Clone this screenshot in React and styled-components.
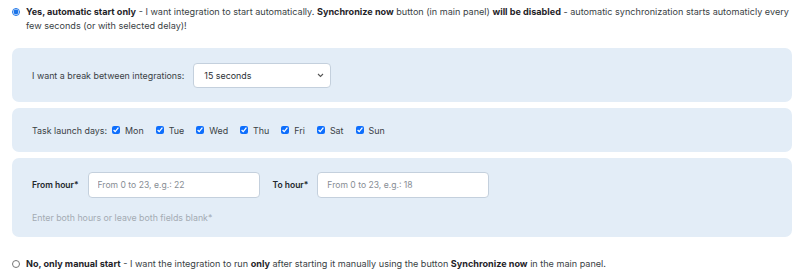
import React, { useState } from 'react'
import styled, { createGlobalStyle } from 'styled-components'

const GlobalStyle = createGlobalStyle`
  body {
    margin: 0;
    background: #ffffff;
    font-family: Inter, "Noto Sans", Arial, sans-serif;
    color: #343a40;
  }
`

const Page = styled.div`
  width: 800px;
  height: 275px;
  box-sizing: border-box;
  padding: 5px 8px 0 12px;
  overflow: hidden;
`

const Option = styled.label`
  display: flex;
  align-items: flex-start;
  gap: 6px;
  font-size: 9.1px;
  line-height: 14px;
  color: #3a3f45;
  margin-top: ${props => props.top || 0}px;
  cursor: pointer;

  b {
    font-weight: 700;
    color: #1f2429;
  }
`

const Radio = styled.input.attrs({ type: 'radio' })`
  width: 8px;
  height: 8px;
  margin: 3px 0 0 0;
  flex: none;
  accent-color: #1a73e8;
`

const Panels = styled.div`
  display: flex;
  flex-direction: column;
  gap: 6px;
  margin-top: 15px;
`

const Panel = styled.div`
  background: #e3edf7;
  border-radius: 7px;
  padding: ${props => props.pad || '0 20px'};
  height: ${props => props.h}px;
  box-sizing: border-box;
  display: flex;
  flex-direction: column;
  justify-content: ${props => (props.top ? 'flex-start' : 'center')};
`

const Row = styled.div`
  display: flex;
  align-items: center;
  gap: ${props => props.gap || 0}px;
  font-size: 8.9px;
  color: #3a3f45;
`

const Label = styled.span`
  font-weight: ${props => (props.bold ? 600 : 400)};
  font-size: ${props => (props.bold ? '8.5px' : 'inherit')};
  color: ${props => (props.bold ? '#22272c' : '#3a3f45')};
  margin-left: ${props => props.ml || 0}px;
`

const SelectBox = styled.div`
  position: relative;
  width: 138px;
  height: 25px;
`

const Select = styled.select`
  appearance: none;
  width: 100%;
  height: 100%;
  border: 1px solid #c4d0dd;
  border-radius: 4px;
  background: #ffffff;
  font-family: inherit;
  font-size: 8.9px;
  color: #2b3035;
  padding: 0 10px;
  outline: none;
`

const Chevron = styled.svg`
  position: absolute;
  right: 7px;
  top: 10px;
  width: 7px;
  height: 5px;
  pointer-events: none;
`

const Days = styled.div`
  display: flex;
  align-items: center;
  gap: 12px;
`

const Day = styled.label`
  display: flex;
  align-items: center;
  gap: 5px;
  cursor: pointer;
`

const Check = styled.input.attrs({ type: 'checkbox' })`
  width: 8px;
  height: 8px;
  margin: 0;
  accent-color: #0d6efd;
`

const TextInput = styled.input`
  width: 172px;
  height: 26px;
  box-sizing: border-box;
  border: 1px solid #c4d0dd;
  border-radius: 4px;
  background: #ffffff;
  font-family: inherit;
  font-size: 8.6px;
  padding: 0 9px;
  outline: none;

  &::placeholder {
    color: #878d94;
  }
`

const Hint = styled.div`
  font-size: 8.8px;
  color: #a4abb3;
  margin-top: 14px;
`

const days = ['Mon', 'Tue', 'Wed', 'Thu', 'Fri', 'Sat', 'Sun']

export default function App() {
  const [mode, setMode] = useState('auto')
  const [checked, setChecked] = useState(days.map(() => true))

  return (
    <>
      <GlobalStyle />
      <Page>
        <Option>
          <Radio name="start" checked={mode === 'auto'} onChange={() => setMode('auto')} />
          <span>
            <b>Yes, automatic start only</b> - I want integration to start automatically. <b>Synchronize now</b> button (in main panel) <b>will be disabled</b> - automatic synchronization starts automaticly every few seconds (or with selected delay)!
          </span>
        </Option>

        <Panels>
          <Panel h={54}>
            <Row gap={9}>
              <Label>I want a break between integrations:</Label>
              <SelectBox>
                <Select defaultValue="15">
                  <option value="0">No break</option>
                  <option value="5">5 seconds</option>
                  <option value="15">15 seconds</option>
                  <option value="30">30 seconds</option>
                  <option value="60">1 minute</option>
                </Select>
                <Chevron viewBox="0 0 7 5">
                  <path d="M1 1l2.5 2.5L6 1" fill="none" stroke="#555" strokeWidth="1.1" />
                </Chevron>
              </SelectBox>
            </Row>
          </Panel>

          <Panel h={44}>
            <Row gap={5}>
              <Label>Task launch days:</Label>
              <Days>
                {days.map((d, i) => (
                  <Day key={d}>
                    <Check
                      checked={checked[i]}
                      onChange={() => setChecked(checked.map((c, j) => (j === i ? !c : c)))}
                    />
                    {d}
                  </Day>
                ))}
              </Days>
            </Row>
          </Panel>

          <Panel h={79} top pad="14px 20px 0">
            <Row gap={9}>
              <Label bold>From hour*</Label>
              <TextInput placeholder="From 0 to 23, e.g.: 22" />
              <Label bold ml={4}>To hour*</Label>
              <TextInput placeholder="From 0 to 23, e.g.: 18" />
            </Row>
            <Hint>Enter both hours or leave both fields blank*</Hint>
          </Panel>
        </Panels>

        <Option top={20}>
          <Radio name="start" checked={mode === 'manual'} onChange={() => setMode('manual')} />
          <span>
            <b>No, only manual start</b> - I want the integration to run <b>only</b> after starting it manually using the button <b>Synchronize now</b> in the main panel.
          </span>
        </Option>
      </Page>
    </>
  )
}
